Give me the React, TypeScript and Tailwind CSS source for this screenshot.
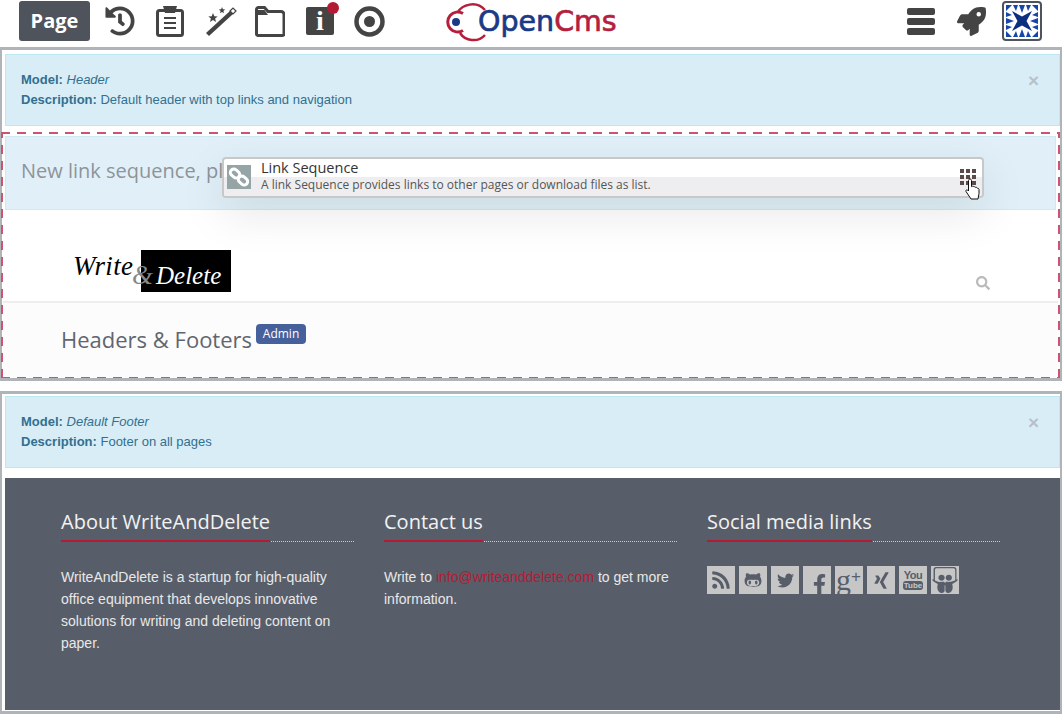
import { FaFacebookF, FaGithubAlt, FaHistory, FaRocket, FaRss, FaSearch, FaSlideshare, FaTwitter, FaXing } from 'react-icons/fa'

const sans = "font-['Liberation_Sans',Arial,sans-serif]"
const open = "font-['Open_Sans',sans-serif]"

function ClipboardIcon() {
  return (
    <svg width="28" height="32" viewBox="0 0 28 32" fill="none">
      <rect x="1.500" y="5.500" width="25" height="25" rx="2" stroke="#444" strokeWidth="3" />
      <path d="M7 1h14l-2 7H9z" fill="#444" />
      <path d="M8 13h12M8 18h12M8 23h12" stroke="#444" strokeWidth="2.200" />
    </svg>
  )
}

function WandIcon() {
  return (
    <svg width="32" height="32" viewBox="0 0 32 32">
      <path d="M1 28 25 6l3 3L4 31z" fill="#444" />
      <path d="M25 6l3-3 3 3-3 3z" fill="#fff" stroke="#444" strokeWidth="1.200" />
      <path d="m8 8 1.300 3.200 3.400.2-2.600 2.200.9 3.300L8 15.100l-3 1.800.9-3.300-2.600-2.200 3.400-.2zM17 2l.9 2.200 2.300.2-1.800 1.500.6 2.300-2-1.200-2 1.200.6-2.300-1.800-1.500 2.300-.2z" fill="#444" />
    </svg>
  )
}

function FolderIcon() {
  return (
    <svg width="30" height="31" viewBox="0 0 30 31" fill="none">
      <path d="M1.500 28V3.500a2 2 0 0 1 2-2h6l3.500 4h13a3 3 0 0 1 3 3V28a1.500 1.500 0 0 1-1.500 1.500H3A1.500 1.500 0 0 1 1.500 28Z" stroke="#444" strokeWidth="3" />
      <path d="M1.500 4h8l3.500 5H1.500z" fill="#444" />
    </svg>
  )
}

function InfoIcon() {
  return (
    <div className="relative w-[28px] h-[28px] bg-[#444] rounded-[2px] flex items-center justify-center">
      <span className="font-['Liberation_Serif',serif] font-bold text-white text-[28px] leading-none">i</span>
      <span className="absolute -top-[5px] -right-[5px] w-[12px] h-[12px] rounded-full bg-[#b31b34]" />
    </div>
  )
}

function TargetIcon() {
  return (
    <svg width="31" height="31" viewBox="0 0 31 31" fill="none">
      <circle cx="15.500" cy="15.500" r="13" stroke="#444" strokeWidth="4.500" />
      <circle cx="15.500" cy="15.500" r="5.500" fill="#444" />
    </svg>
  )
}

function LogoMark() {
  return (
    <svg width="44" height="42" viewBox="0 0 44 42" fill="none" className="-mr-[10px] shrink-0">
      <path d="M19 12.500A10 10 0 1 0 19 29.500" stroke="#b51f3c" strokeWidth="3" />
      <path d="M14 11C18 4 32-1 41 9M16 32c5 8 18 10 25 2" stroke="#b51f3c" strokeWidth="2.500" />
      <circle cx="12" cy="21" r="4" fill="#1a3a85" />
    </svg>
  )
}

function SpriteLogo() {
  return (
    <div className="w-[40px] h-[40px] border-[2px] border-[#4f545c] rounded-[4px] flex items-center justify-center">
      <svg width="34" height="34" viewBox="0 0 34 34">
        <rect width="34" height="34" fill="#fff" />
        <path d="M1 1h6L1 7zM33 1h-6l6 6zM1 33h6l-6-6zM33 33h-6l6-6z" fill="#1546a8" />
        <path d="M8 1h5l-2 6zM14 1h6l-3 8zM21 1h5l-3 6zM8 33h5l-2-6zM14 33h6l-3-8zM21 33h5l-3-6z" fill="#1546a8" />
        <path d="M1 8v5l6-2zM1 14v6l8-3zM1 21v5l6-3zM33 8v5l-6-2zM33 14v6l-8-3zM33 21v5l-6-3z" fill="#1546a8" />
        <path d="M7 7 17 12.500 27 7 21.500 17 27 27 17 21.500 7 27 12.500 17z" fill="#0d2f80" />
      </svg>
    </div>
  )
}

function AlertBox({ model, description }: { model: string; description: string }) {
  return (
    <div className={`relative h-[72px] bg-[#d9edf7] border border-[#bce8f1] text-[#31708f] px-[15px] pt-[15px] text-[13px] leading-[20px] ${sans}`}>
      <div><b>Model:</b> <i>{model}</i></div>
      <div><b>Description:</b> {description}</div>
      <span className="absolute right-[20px] top-[16px] text-[#b5c2c9] font-bold text-[19px] leading-[20px]">×</span>
    </div>
  )
}

function FooterColumn({ title, underline, children }: { title: string; underline: string; children: React.ReactNode }) {
  return (
    <div className="w-[293px]">
      <div className="border-b border-dotted border-[#c8cbd0] h-[36px]">
        <span className={`inline-block h-[36px] border-b-2 border-[#b31b34] text-[20px] leading-[32px] text-[#f2f2f2] whitespace-nowrap ${open} ${underline}`}>{title}</span>
      </div>
      <div className={`mt-[24px] text-[14px] leading-[22px] text-[#e8e8e8] ${sans}`}>{children}</div>
    </div>
  )
}

function Social({ children }: { children: React.ReactNode }) {
  return <div className="w-[28px] h-[28px] bg-[#c6c6c6] text-[#585e69] flex items-center justify-center overflow-hidden">{children}</div>
}

export default function App() {
  return (
    <div className="w-[1063px] h-[716px] bg-white overflow-hidden">
      {/* Toolbar */}
      <div className="h-[47px] flex items-start pt-[1px] pl-[19px] pr-[21px]">
        <div className={`w-[71px] h-[40px] bg-[#4f545c] rounded-[3px] text-white font-bold text-[20px] flex items-center justify-center ${open}`}>Page</div>
        <div className="flex items-center h-[40px] ml-[15px] text-[#444]">
          <div className="w-[51px]"><FaHistory size={30} /></div>
          <div className="w-[49px]"><ClipboardIcon /></div>
          <div className="w-[50px]"><WandIcon /></div>
          <div className="w-[51px]"><FolderIcon /></div>
          <div className="w-[48px]"><InfoIcon /></div>
          <div className="w-[31px]"><TargetIcon /></div>
        </div>
        <div className="flex items-center ml-[59px] h-[42px]">
          <LogoMark />
          <span className="font-['DejaVu_Sans',sans-serif] text-[28.5px] leading-none [-webkit-text-stroke:0.7px_#1a3a85] text-[#1a3a85]">Open</span>
          <span className="font-['DejaVu_Sans',sans-serif] text-[28.5px] leading-none [-webkit-text-stroke:0.7px_#b51f3c] text-[#b51f3c]">Cms</span>
        </div>
        <div className="flex items-center h-[40px] ml-auto">
          <div className="flex flex-col gap-[3px] mr-[22px]">
            <span className="block w-[28px] h-[7px] rounded-[2px] bg-[#444]" />
            <span className="block w-[28px] h-[7px] rounded-[2px] bg-[#444]" />
            <span className="block w-[28px] h-[7px] rounded-[2px] bg-[#444]" />
          </div>
          <FaRocket size={29} color="#444" className="mr-[16px]" />
          <SpriteLogo />
        </div>
      </div>

      {/* Header element */}
      <div className="h-[334px] border-y-[3px] border-x-[2px] border-[#b0b3b8] mr-[1px] pt-[4px]">
        <div className="ml-[3px]">
          <AlertBox model="Header" description="Default header with top links and navigation" />
        </div>
        <div className="relative mt-[6px] -ml-[1px] h-[246px] p-[2px] pt-[4px] [background:repeating-linear-gradient(90deg,#c9566e_0_9px,transparent_9px_16px)_top/100%_2px_no-repeat,repeating-linear-gradient(90deg,#c9566e_0_9px,transparent_9px_16px)_bottom/100%_2px_no-repeat,repeating-linear-gradient(0deg,#c9566e_0_9px,transparent_9px_16px)_left/2px_100%_no-repeat,repeating-linear-gradient(0deg,#c9566e_0_9px,transparent_9px_16px)_right/2px_100%_no-repeat]">
          <div className={`ml-[2px] mr-[2px] h-[74px] bg-[#e1f0f8] border border-[#cfe8f2] pl-[15px] text-[20px] leading-[68px] text-[#8e9499] ${open}`}>
            New link sequence, please edit
          </div>

          {/* Link sequence bar */}
          <div className={`absolute left-[221px] top-[25px] w-[762px] h-[41px] rounded-[4px] border-[2px] border-[#c8c8c8] bg-white shadow-[0_15px_45px_rgba(0,0,0,0.1)] ${open}`}>
            <div className="h-[18px] text-[14.5px] leading-[18px] text-[#333] pl-[37px]">Link Sequence</div>
            <div className="h-[19px] bg-[#eeeef0] rounded-b-[2px] text-[12px] leading-[16px] text-[#555] pl-[37px]">A link Sequence provides links to other pages or download files as list.</div>
            <div className="absolute left-[3px] top-[6px] w-[24px] h-[24px] bg-[#95a5a6] flex items-center justify-center">
              <svg width="22" height="22" viewBox="0 0 22 22" fill="none" stroke="#fff" strokeWidth="3">
                <rect x="2" y="4" width="10" height="7" rx="3.500" transform="rotate(40 7 7.500)" />
                <rect x="10" y="11" width="10" height="7" rx="3.500" transform="rotate(40 15 14.500)" />
              </svg>
            </div>
            <div className="absolute right-[6px] top-[10px] grid grid-cols-3 gap-[2px]">
              {Array.from({ length: 9 }).map((_, i) => (
                <span key={i} className="block w-[4px] h-[4px] bg-[#5a4a4a]" />
              ))}
            </div>
            <svg className="absolute right-[1px] top-[19px]" width="16" height="22" viewBox="0 0 16 22">
              <path d="M5 1c1 0 1.500.8 1.500 1.600v6l1-.3c.8-.2 1.200.2 1.500.6.800-.4 1.500 0 1.700.6.800-.3 1.500.1 1.800.8.700-.2 1.500.4 1.500 1.300v4L13 21H6L1 13.500c-.6-1 .6-2.200 1.600-1.400L3.500 13V2.600C3.500 1.800 4.100 1 5 1Z" fill="#fff" stroke="#111" strokeWidth="1" />
            </svg>
          </div>

          {/* Logo row */}
          <div className="h-[93px] border-b-2 border-[#eeeeee] relative">
            <div className="absolute left-[70px] top-[40px] flex h-[42px] items-start">
              <span className="font-['Liberation_Serif',serif] italic text-[27px] leading-[32px] tracking-[0.4px] text-black w-[68px]">Write</span>
              <span className="absolute left-[59px] top-[10px] font-['Liberation_Serif',serif] italic text-[27px] leading-[30px] text-[#888]">&amp;</span>
              <div className="w-[90px] h-[42px] bg-black text-white font-['Liberation_Serif',serif] italic text-[25px] leading-[52px] pl-[15px]">Delete</div>
            </div>
            <FaSearch size={14} color="#bbb" className="absolute right-[68px] top-[66px]" />
          </div>
          <div className="h-[74px] bg-[#fcfcfc] pl-[58px] pt-[17px] flex items-start">
            <span className={`text-[22px] leading-[38px] text-[#5f6670] ${open}`}>Headers &amp; Footers</span>
            <span className={`ml-[4px] mt-[4px] w-[50px] text-center h-[20px] bg-[#46609c] text-white text-[12px] leading-[19px] rounded-[4px] ${open}`}>Admin</span>
          </div>
        </div>
      </div>

      <div className="h-[10px]" />

      {/* Footer element */}
      <div className="h-[323px] border-y-[3px] border-x-[2px] border-[#b0b3b8] mr-[1px] pt-[2px]">
        <div className="ml-[3px]">
          <AlertBox model="Default Footer" description="Footer on all pages" />
        </div>
        <div className="ml-[3px] mt-[10px] h-[232px] bg-[#585e69] flex gap-[30px] pl-[56px] pt-[28px]">
          <FooterColumn title="About WriteAndDelete" underline="w-[209px]">
            WriteAndDelete is a startup for high-quality office equipment that develops innovative solutions for writing and deleting content on paper.
          </FooterColumn>
          <FooterColumn title="Contact us" underline="w-[99px]">
            Write to <span className="text-[#b31b34]">info@writeanddelete.com</span> to get more information.
          </FooterColumn>
          <FooterColumn title="Social media links" underline="w-[165px]">
            <div className="flex gap-[4px]">
              <Social><FaRss size={20} /></Social>
              <Social><FaGithubAlt size={18} /></Social>
              <Social><FaTwitter size={17} /></Social>
              <Social><FaFacebookF size={21} className="mt-[9px] ml-[4px]" /></Social>
              <Social>
                <span className="font-['Liberation_Serif',serif] text-[30px] leading-[22px] text-[#585e69] -mt-[1px] -ml-[1px]">g</span>
                <span className={`text-[17px] leading-[15px] font-light text-[#585e69] -mt-[8px] ${sans}`}>+</span>
              </Social>
              <Social><FaXing size={19} /></Social>
              <Social>
                <div className={`flex flex-col items-center gap-[1px] ${sans}`}>
                  <span className="text-[11px] leading-[10px] font-bold tracking-[-0.5px]">You</span>
                  <span className="px-[1px] rounded-[3px] bg-[#585e69] text-[#c6c6c6] text-[8px] leading-[9px] font-bold">Tube</span>
                </div>
              </Social>
              <Social><FaSlideshare size={26} /></Social>
            </div>
          </FooterColumn>
        </div>
      </div>
    </div>
  )
}
